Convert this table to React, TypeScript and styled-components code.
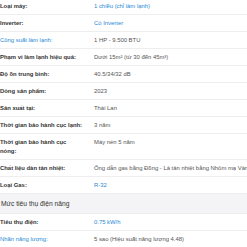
import React from "react";
import styled, { createGlobalStyle } from "styled-components";

const Global = createGlobalStyle`
  html, body { margin: 0; padding: 0; background: #fff; overflow: hidden; }
  body { font-family: "Liberation Sans", Arial, sans-serif; }
`;

const Page = styled.div`
  width: 247px;
  margin-top: -2px;
  overflow: hidden;
`;

const Row = styled.div`
  display: grid;
  grid-template-columns: 94px 1fr;
  border-bottom: 1px solid #eeeeee;
  padding: 4px 0 3px;
  font-size: 5.9px;
  line-height: 9px;
`;

const Label = styled.div<{ $link?: boolean }>`
  color: ${(p) => (p.$link ? "#288ad6" : "#333333")};
  font-weight: ${(p) => (p.$link ? 400 : 700)};
  white-space: nowrap;
`;

const Value = styled.div<{ $link?: boolean; $nowrap?: boolean }>`
  color: ${(p) => (p.$link ? "#288ad6" : "#555555")};
  white-space: ${(p) => (p.$nowrap ? "nowrap" : "normal")};
`;

const Section = styled.div`
  background: #f4f4f6;
  color: #333333;
  font-size: 6.7px;
  line-height: 11px;
  padding: 4px 1px;
  border-bottom: 1px solid #eeeeee;
`;

type Item = { l: string; v: string; ll?: boolean; vl?: boolean; nw?: boolean; br?: boolean };

const group1: Item[] = [
  { l: "Loại máy:", v: "1 chiều (chỉ làm lạnh)", vl: true },
  { l: "Inverter:", v: "Có Inverter", vl: true },
  { l: "Công suất làm lạnh:", v: "1 HP - 9.500 BTU", ll: true },
  { l: "Phạm vi làm lạnh hiệu quả:", v: "Dưới 15m² (từ 30 đến 45m³)" },
  { l: "Độ ồn trung bình:", v: "40.5/34/32 dB" },
  { l: "Dòng sản phẩm:", v: "2023" },
  { l: "Sản xuất tại:", v: "Thái Lan" },
  { l: "Thời gian bảo hành cục lạnh:", v: "3 năm" },
  { l: "Thời gian bảo hành cục nóng:", v: "Máy nén 5 năm", br: true },
  { l: "Chất liệu dàn tản nhiệt:", v: "Ống dẫn gas bằng Đồng - Lá tản nhiệt bằng Nhôm mạ Vàng", nw: true },
  { l: "Loại Gas:", v: "R-32", vl: true },
];

const group2: Item[] = [
  { l: "Tiêu thụ điện:", v: "0.75 kW/h", vl: true },
  { l: "Nhãn năng lượng:", v: "5 sao (Hiệu suất năng lượng 4.48)", ll: true },
];

const renderRow = (it: Item) => (
  <Row key={it.l}>
    <Label $link={it.ll}>
      {it.br ? (
        <>
          Thời gian bảo hành cục
          <br />
          nóng:
        </>
      ) : (
        it.l
      )}
    </Label>
    <Value $link={it.vl} $nowrap={it.nw}>
      {it.v}
    </Value>
  </Row>
);

export default function App() {
  return (
    <>
      <Global />
      <Page>
        {group1.map(renderRow)}
        <Section>Mức tiêu thụ điện năng</Section>
        {group2.map(renderRow)}
      </Page>
    </>
  );
}
